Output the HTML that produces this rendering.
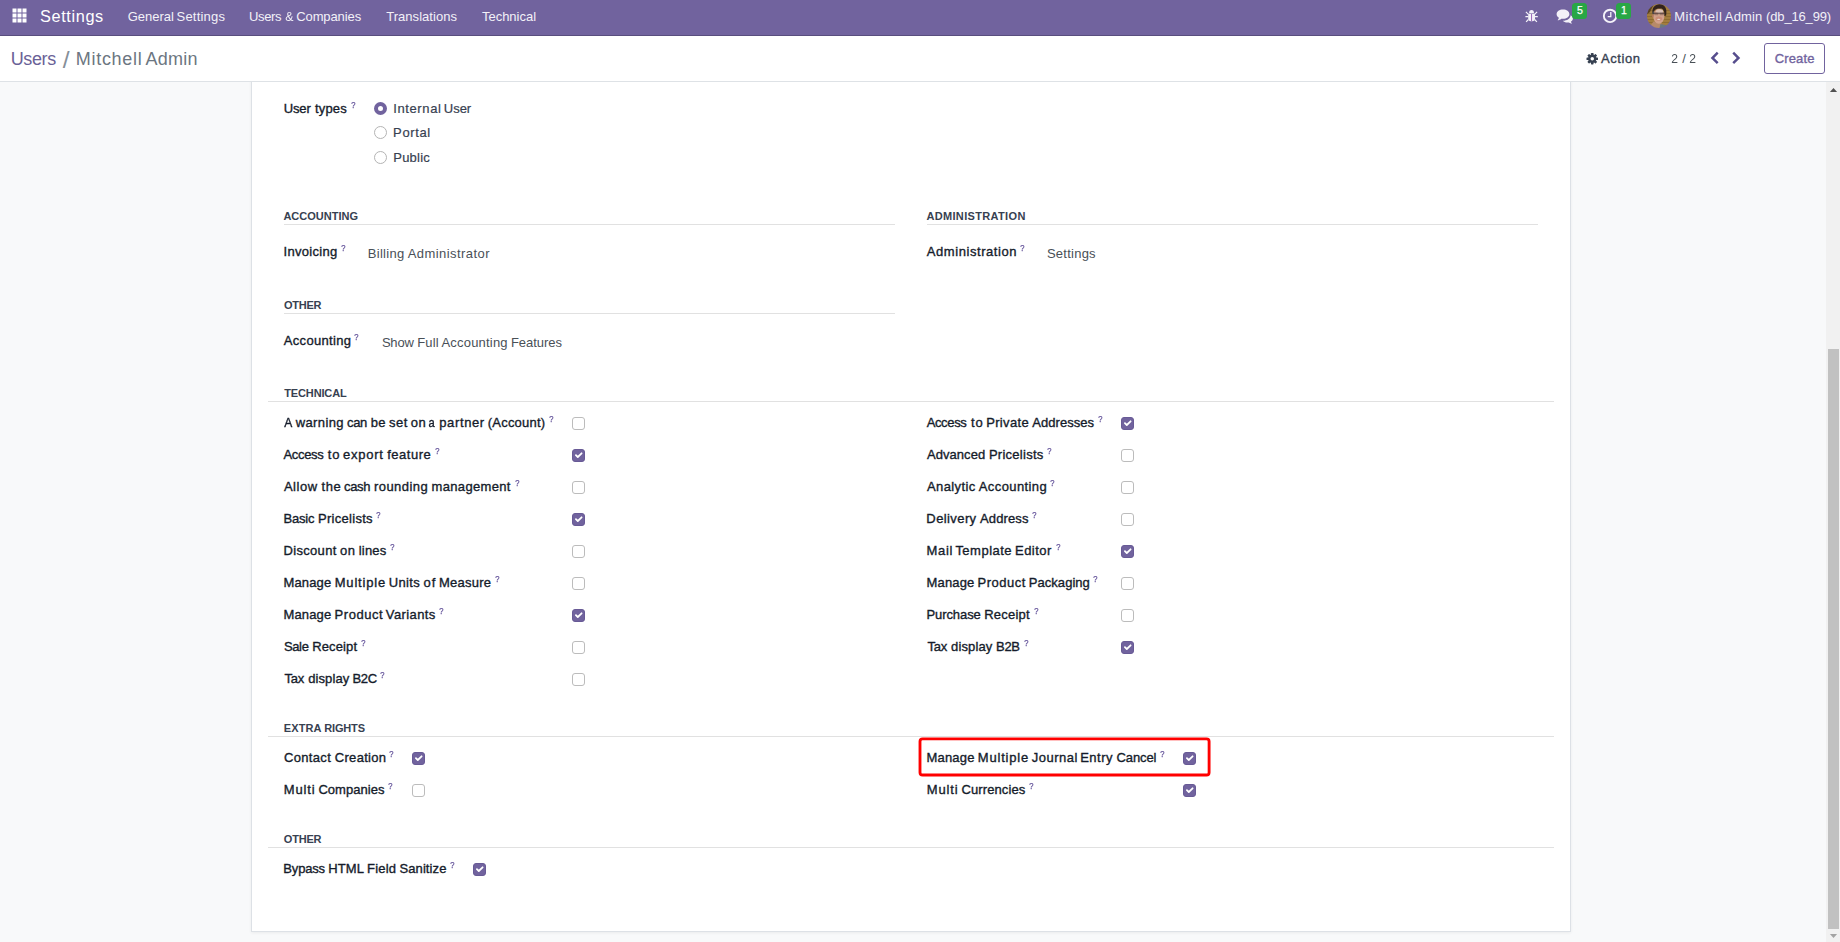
<!DOCTYPE html>
<html lang="en">
<head>
<meta charset="utf-8">
<title>Odoo - Mitchell Admin</title>
<style>
html,body{margin:0;padding:0;}
body{width:1840px;height:942px;overflow:hidden;position:relative;background:#f8f9fa;font-family:'Liberation Sans',sans-serif;font-size:13px;color:#212529;}
.abs{position:absolute;display:block;}
.ln{position:static;display:block;margin:0;padding:0;height:0;}
.t{position:absolute;display:block;white-space:nowrap;line-height:20px;}
#nav{left:0;top:0;width:1840px;height:35px;background:#71639e;border-bottom:1px solid #594e7e;}
#cp{left:0;top:36px;width:1840px;height:45px;background:#fff;border-bottom:1px solid #dee2e6;}
#sheet{left:251px;top:60px;width:1318px;height:870px;background:#fff;border:1px solid #dde1e6;box-shadow:0 1px 3px rgba(0,0,0,.06);}
.hl{position:absolute;display:block;height:1px;background:#e1e1e1;}
.cb{position:absolute;display:block;box-sizing:border-box;width:13px;height:13px;border:1px solid #bcbcbc;border-radius:3px;background:#fff;}
.cb.on{background:#71639e;border-color:#685a96;}
.cb svg{position:absolute;left:-1px;top:-1px;width:13px;height:13px;}
.cb svg path{fill:none;stroke:#fff;stroke-width:1.8;stroke-linecap:round;stroke-linejoin:round;}
.rd{position:absolute;display:block;box-sizing:border-box;width:13px;height:13px;border:1px solid #b4b4b4;border-radius:50%;background:#fff;}
.rd.on{border:4px solid #71639e;}
.badge{position:absolute;display:block;width:15.300px;height:16.200px;border-radius:3.500px;background:#28a745;}
#btn{left:1764px;top:43px;width:59px;height:29px;border:1px solid #71639e;border-radius:3px;background:#fff;}
#red{left:919px;top:737px;width:287px;height:35px;border:2px solid #ff0000;border-radius:3px;}
#sb{left:1826px;top:82px;width:14px;height:860px;background:#f1f1f1;}
#thumb{left:1828px;top:349px;width:11px;height:580px;background:#c1c1c1;}
.f0{font-size:16.3px;color:#ffffff;font-weight:400;}
.f1{font-size:13px;color:#f3f1f8;font-weight:400;}
.f2{font-size:18px;color:#6a6197;font-weight:400;}
.f3{font-size:24.5px;color:#868f99;font-weight:400;}
.f4{font-size:18px;color:#6c7681;font-weight:400;}
.f5{font-size:13px;color:#374151;font-weight:400;-webkit-text-stroke:0.35px currentColor;}
.f6{font-size:13px;color:#495057;font-weight:400;}
.f7{font-size:13px;color:#71639e;font-weight:400;-webkit-text-stroke:0.35px currentColor;}
.f8{font-size:13px;color:#151c2b;font-weight:400;-webkit-text-stroke:0.35px currentColor;}
.f9{font-size:8.8px;color:#63529a;font-weight:400;-webkit-text-stroke:0.25px currentColor;}
.f10{font-size:13px;color:#374151;font-weight:400;-webkit-text-stroke:0.2px currentColor;}
.f11{font-size:11px;color:#374151;font-weight:700;}
</style>
</head>
<body>
<div class="abs" id="sheet"></div>
<div class="abs" id="nav"></div>
<div class="abs" id="cp"></div>

<!-- apps icon -->
<svg class="abs" style="left:12px;top:8px" width="15" height="15" viewBox="0 0 15 15"><g fill="#fff"><rect x="0.5" y="0.5" width="4" height="4"/><rect x="5.5" y="0.5" width="4" height="4"/><rect x="10.5" y="0.5" width="4" height="4"/><rect x="0.5" y="5.5" width="4" height="4"/><rect x="5.5" y="5.5" width="4" height="4"/><rect x="10.5" y="5.5" width="4" height="4"/><rect x="0.5" y="10.5" width="4" height="4"/><rect x="5.5" y="10.5" width="4" height="4"/><rect x="10.5" y="10.5" width="4" height="4"/></g></svg>

<!-- bug icon -->
<svg class="abs" style="left:1525px;top:9px" width="14" height="14" viewBox="0 0 14 14"><g fill="#f4f2f9"><path d="M4.100 4.300A2.450 3.300 0 0 1 9 4.300z"/><path d="M3.200 4.700h6.800v4.800a2.700 2.700 0 0 1-2.700 2.700h-1.400a2.700 2.700 0 0 1-2.700-2.700z"/></g><path d="M0.900 2.900l2.500 2.500M12.100 2.900 9.600 5.400M0.400 7.600h3M9.800 7.600h3M3.400 10.500l-2.300 2.300M9.600 10.500l2.300 2.300" stroke="#f4f2f9" stroke-width="1.200" fill="none"/><path d="M6.550 5v7.200" stroke="#9a66b8" stroke-width="1"/></svg>

<!-- chat icon -->
<svg class="abs" style="left:1556px;top:9px" width="18" height="15" viewBox="0 0 18 15"><g fill="#f3f1f8"><path d="M7 0.6c3.6 0 6.4 2 6.4 4.6S10.600 9.800 7 9.800c-.6 0-1.200-.05-1.700-.15C4.300 10.600 2.900 11.100 1.600 11.200c.7-.7 1.200-1.500 1.300-2.400C1.500 7.900.6 6.600.6 5.200.6 2.600 3.400.6 7 .6z"/><path d="M14.600 6.200c1.400.8 2.300 2 2.300 3.300 0 1.200-.7 2.300-1.900 3.100.1.800.5 1.500 1.100 2.100-1.200-.1-2.400-.6-3.300-1.300-.4.100-.9.100-1.400.1-1.900 0-3.600-.7-4.600-1.800 4 .1 7.700-2 7.800-5.500z"/></g></svg>
<i class="badge" style="left:1572.200px;top:3px"></i>

<!-- clock icon -->
<svg class="abs" style="left:1602px;top:8px" width="16" height="16" viewBox="0 0 16 16"><circle cx="8.050" cy="7.900" r="6.200" fill="none" stroke="#f4f2f9" stroke-width="1.900"/><path d="M8.800 4v4.700H5.700" fill="none" stroke="#f4f2f9" stroke-width="1.300"/></svg>
<i class="badge" style="left:1616px;top:3px"></i>

<!-- avatar -->
<svg class="abs" style="left:1647px;top:4px" width="24" height="24" viewBox="0 0 24 24"><defs><clipPath id="av"><circle cx="12" cy="12" r="12"/></clipPath><filter id="bl" x="-20%" y="-20%" width="140%" height="140%"><feGaussianBlur stdDeviation="0.750"/></filter></defs><g clip-path="url(#av)"><g filter="url(#bl)"><rect x="-4" y="-4" width="32" height="32" fill="#a37d3c"/><path d="M-1 6.500h26M-1 9.500h26M-1 12.500h26M-1 15.500h26M-1 18.500h26" stroke="#7a5a28" stroke-width=".800" opacity=".600"/><path d="M-2-2h10L3 8-2 12z" fill="#5a4322"/><path d="M1 25 6.500 17.500l8 2 1 5.500z" fill="#b78a69"/><path d="M13.500 20 20.500 21.500 17 26h-5z" fill="#6a787e"/><ellipse cx="11.800" cy="12.300" rx="5.600" ry="7.400" fill="#d2a18b"/><ellipse cx="12.600" cy="7.300" rx="3.600" ry="2.100" fill="#dbc0b3"/><ellipse cx="5.800" cy="11.800" rx=".900" ry="1.600" fill="#b5775d"/><path d="M5.500 9.500C4.600 3.800 8 .200 12.600.200c5.200 0 7.800 4.100 6.500 11.400l-1.700.400c.400-3.800-.700-6.300-2.800-7.400-3-.500-5.600 0-6.900 1.400-.900 1.300-1 2.300-1.100 3.700z" fill="#30241f"/><path d="M5.600 7.500h1.600v2.700H5.700z" fill="#5c5a60"/><rect x="7.300" y="8.800" width="4.100" height="2.400" rx=".600" fill="#5a4238" opacity=".400"/><rect x="12.600" y="8.800" width="4.300" height="2.400" rx=".600" fill="#5a4238" opacity=".400"/><path d="M5.800 9.200h12" stroke="#3d2e2e" stroke-width=".800"/><ellipse cx="11.800" cy="14.700" rx="3.300" ry="2.100" fill="#c8826e" opacity=".650"/><ellipse cx="11.700" cy="15.300" rx="1.700" ry=".650" fill="#ead6cf"/></g></g></svg>

<!-- control panel icons -->
<svg class="abs" style="left:1585px;top:51px" width="15" height="15" viewBox="0 0 15 15"><g transform="translate(7.250 7.700)" fill="#374151"><circle r="4.150"/><rect x="-1.300" y="-5.750" width="2.600" height="2.600" rx=".600" transform="rotate(0)"/><rect x="-1.300" y="-5.750" width="2.600" height="2.600" rx=".600" transform="rotate(45)"/><rect x="-1.300" y="-5.750" width="2.600" height="2.600" rx=".600" transform="rotate(90)"/><rect x="-1.300" y="-5.750" width="2.600" height="2.600" rx=".600" transform="rotate(135)"/><rect x="-1.300" y="-5.750" width="2.600" height="2.600" rx=".600" transform="rotate(180)"/><rect x="-1.300" y="-5.750" width="2.600" height="2.600" rx=".600" transform="rotate(225)"/><rect x="-1.300" y="-5.750" width="2.600" height="2.600" rx=".600" transform="rotate(270)"/><rect x="-1.300" y="-5.750" width="2.600" height="2.600" rx=".600" transform="rotate(315)"/><circle r="1.750" fill="#fff"/></g></svg>
<svg class="abs" style="left:1708px;top:50px" width="14" height="16" viewBox="0 0 14 16"><path d="M2.700 7.900 8.800 1.800l1.750 1.750L6.200 7.900l4.350 4.350L8.800 14z" fill="#564d8d"/></svg>
<svg class="abs" style="left:1730px;top:50px" width="14" height="16" viewBox="0 0 14 16"><path d="M10.200 7.900 4.100 1.800 2.350 3.550 6.700 7.900 2.350 12.250 4.100 14z" fill="#564d8d"/></svg>
<div class="abs" id="btn"></div>

<!-- separators -->
<i class="hl" style="left:284px;top:224px;width:611px"></i>
<i class="hl" style="left:927px;top:224px;width:611px"></i>
<i class="hl" style="left:284px;top:313px;width:611px"></i>
<i class="hl" style="left:268px;top:401px;width:1286px"></i>
<i class="hl" style="left:268px;top:736px;width:1286px"></i>
<i class="hl" style="left:268px;top:847px;width:1286px"></i>

<!-- radios -->
<i class="rd on" style="left:374px;top:102px"></i>
<i class="rd" style="left:374px;top:126px"></i>
<i class="rd" style="left:374px;top:151px"></i>

<i class="cb" style="left:572px;top:417px"></i>
<i class="cb on" style="left:572px;top:449px"><svg viewBox="0 0 13 13"><path d="M3.9 6.200 5.800 8 9.600 4.300"/></svg></i>
<i class="cb" style="left:572px;top:481px"></i>
<i class="cb on" style="left:572px;top:513px"><svg viewBox="0 0 13 13"><path d="M3.9 6.200 5.800 8 9.600 4.300"/></svg></i>
<i class="cb" style="left:572px;top:545px"></i>
<i class="cb" style="left:572px;top:577px"></i>
<i class="cb on" style="left:572px;top:609px"><svg viewBox="0 0 13 13"><path d="M3.9 6.200 5.800 8 9.600 4.300"/></svg></i>
<i class="cb" style="left:572px;top:641px"></i>
<i class="cb" style="left:572px;top:673px"></i>
<i class="cb on" style="left:1121px;top:417px"><svg viewBox="0 0 13 13"><path d="M3.9 6.200 5.800 8 9.600 4.300"/></svg></i>
<i class="cb" style="left:1121px;top:449px"></i>
<i class="cb" style="left:1121px;top:481px"></i>
<i class="cb" style="left:1121px;top:513px"></i>
<i class="cb on" style="left:1121px;top:545px"><svg viewBox="0 0 13 13"><path d="M3.9 6.200 5.800 8 9.600 4.300"/></svg></i>
<i class="cb" style="left:1121px;top:577px"></i>
<i class="cb" style="left:1121px;top:609px"></i>
<i class="cb on" style="left:1121px;top:641px"><svg viewBox="0 0 13 13"><path d="M3.9 6.200 5.800 8 9.600 4.300"/></svg></i>
<i class="cb on" style="left:412px;top:752px"><svg viewBox="0 0 13 13"><path d="M3.9 6.200 5.800 8 9.600 4.300"/></svg></i>
<i class="cb" style="left:412px;top:784px"></i>
<i class="cb on" style="left:1183px;top:752px"><svg viewBox="0 0 13 13"><path d="M3.9 6.200 5.800 8 9.600 4.300"/></svg></i>
<i class="cb on" style="left:1183px;top:784px"><svg viewBox="0 0 13 13"><path d="M3.9 6.200 5.800 8 9.600 4.300"/></svg></i>
<i class="cb on" style="left:473px;top:863px"><svg viewBox="0 0 13 13"><path d="M3.9 6.200 5.800 8 9.600 4.300"/></svg></i>

<svg class="abs" style="left:910px;top:730px" width="310" height="56" viewBox="910 730 310 56"><rect x="920" y="738.800" width="289.100" height="36.200" rx="2.600" fill="none" stroke="#ff0000" stroke-width="2.850"/></svg>

<!-- scrollbar -->
<div class="abs" id="sb"></div>
<div class="abs" id="thumb"></div>
<svg class="abs" style="left:1826px;top:82px" width="14" height="15" viewBox="1826 82 14 15"><path d="M1829.900 92h7.200L1833.500 87.900z" fill="#505050"/></svg>
<svg class="abs" style="left:1826px;top:927px" width="14" height="15" viewBox="1826 927 14 15"><path d="M1829.900 934h7.200L1833.500 938.100z" fill="#a3a3a3"/></svg>

<div class="ln"><span class="t f0" style="left:40.08px;top:6px;letter-spacing:0.614px;">Settings</span></div>
<div class="ln"><span class="t f1" style="left:127.71px;top:7px;letter-spacing:0.008px;">General</span> <span class="t f1" style="left:176.53px;top:7px;letter-spacing:0.202px;">Settings</span></div>
<div class="ln"><span class="t f1" style="left:248.93px;top:7px;letter-spacing:-0.338px;">Users</span> <span class="t f1" style="left:284.64px;top:7px;transform:scaleX(0.946);transform-origin:4.50px 50%;">&amp;</span> <span class="t f1" style="left:296.23px;top:7px;letter-spacing:-0.101px;">Companies</span></div>
<div class="ln"><span class="t f1" style="left:386.20px;top:7px;letter-spacing:0.045px;">Translations</span></div>
<div class="ln"><span class="t f1" style="left:481.95px;top:7px;letter-spacing:-0.012px;">Technical</span></div>
<div class="ln"><span class="t f1" style="left:1674.25px;top:7px;letter-spacing:0.500px;">Mitchell</span> <span class="t f1" style="left:1724.87px;top:7px;letter-spacing:0.139px;">Admin</span> <span class="t f1" style="left:1766.05px;top:7px;letter-spacing:-0.151px;">(db_16_99)</span></div>
<div class="ln"><span class="t f2" style="left:10.65px;top:49px;letter-spacing:-0.350px;">Users</span></div>
<div class="ln"><span class="t f3" style="left:62.78px;top:50px;line-height:20px;">/</span></div>
<div class="ln"><span class="t f4" style="left:75.68px;top:49px;letter-spacing:0.739px;">Mitchell</span> <span class="t f4" style="left:145.53px;top:49px;letter-spacing:0.273px;">Admin</span></div>
<div class="ln"><span class="t f5" style="left:1601.10px;top:49px;letter-spacing:0.530px;">Action</span></div>
<div class="ln"><span class="t f6" style="left:1671.10px;top:49px;transform:scaleX(0.931);transform-origin:3.62px 50%;">2</span> <span class="t f6" style="left:1682.15px;top:49px;">/</span> <span class="t f6" style="left:1689.45px;top:49px;transform:scaleX(0.931);transform-origin:3.62px 50%;">2</span></div>
<div class="ln"><span class="t f7" style="left:1774.65px;top:49px;letter-spacing:0.150px;">Create</span></div>
<div class="ln"><span class="t f8" style="left:283.68px;top:99px;letter-spacing:-0.135px;">User</span> <span class="t f8" style="left:314.95px;top:99px;letter-spacing:0.192px;">types</span></div>
<div class="ln"><span class="t f9" style="left:350.50px;top:95px;transform:scaleX(.86);transform-origin:2.50px 50%;">?</span></div>
<div class="ln"><span class="t f10" style="left:393.15px;top:99px;letter-spacing:0.625px;">Internal</span> <span class="t f10" style="left:443.74px;top:99px;letter-spacing:0.003px;">User</span></div>
<div class="ln"><span class="t f10" style="left:393.12px;top:123px;letter-spacing:0.630px;">Portal</span></div>
<div class="ln"><span class="t f10" style="left:393.25px;top:148px;letter-spacing:0.230px;">Public</span></div>
<div class="ln"><span class="t f11" style="left:283.40px;top:206px;letter-spacing:0.017px;">ACCOUNTING</span></div>
<div class="ln"><span class="t f11" style="left:926.38px;top:206px;letter-spacing:0.342px;">ADMINISTRATION</span></div>
<div class="ln"><span class="t f8" style="left:283.50px;top:242px;letter-spacing:0.300px;">Invoicing</span></div>
<div class="ln"><span class="t f9" style="left:340.60px;top:238px;transform:scaleX(.86);transform-origin:2.50px 50%;">?</span></div>
<div class="ln"><span class="t f6" style="left:367.75px;top:244px;letter-spacing:0.292px;">Billing</span> <span class="t f6" style="left:407.66px;top:244px;letter-spacing:0.437px;">Administrator</span></div>
<div class="ln"><span class="t f8" style="left:926.80px;top:242px;letter-spacing:0.565px;">Administration</span></div>
<div class="ln"><span class="t f9" style="left:1019.80px;top:238px;transform:scaleX(.86);transform-origin:2.50px 50%;">?</span></div>
<div class="ln"><span class="t f6" style="left:1046.90px;top:244px;letter-spacing:0.250px;">Settings</span></div>
<div class="ln"><span class="t f11" style="left:283.93px;top:295px;letter-spacing:-0.237px;">OTHER</span></div>
<div class="ln"><span class="t f8" style="left:283.80px;top:331px;letter-spacing:0.317px;">Accounting</span></div>
<div class="ln"><span class="t f9" style="left:354.30px;top:327px;transform:scaleX(.86);transform-origin:2.50px 50%;">?</span></div>
<div class="ln"><span class="t f6" style="left:381.91px;top:333px;letter-spacing:-0.209px;">Show</span> <span class="t f6" style="left:417.24px;top:333px;letter-spacing:0.183px;">Full</span> <span class="t f6" style="left:441.44px;top:333px;letter-spacing:0.202px;">Accounting</span> <span class="t f6" style="left:510.88px;top:333px;letter-spacing:-0.016px;">Features</span></div>
<div class="ln"><span class="t f11" style="left:284.27px;top:383px;letter-spacing:-0.144px;">TECHNICAL</span></div>
<div class="ln"><span class="t f8" style="left:283.52px;top:413px;transform:scaleX(0.928);transform-origin:4.25px 50%;">A</span> <span class="t f8" style="left:295.77px;top:413px;letter-spacing:0.368px;">warning</span> <span class="t f8" style="left:347.08px;top:413px;letter-spacing:-0.350px;">can</span> <span class="t f8" style="left:370.83px;top:413px;letter-spacing:0.127px;">be</span> <span class="t f8" style="left:389.07px;top:413px;letter-spacing:0.420px;">set</span> <span class="t f8" style="left:410.80px;top:413px;letter-spacing:0.388px;">on</span> <span class="t f8" style="left:428.21px;top:413px;transform:scaleX(0.860);transform-origin:4.00px 50%;">a</span> <span class="t f8" style="left:439.19px;top:413px;letter-spacing:0.636px;">partner</span> <span class="t f8" style="left:487.70px;top:413px;letter-spacing:0.234px;">(Account)</span></div>
<div class="ln"><span class="t f9" style="left:548.70px;top:409px;transform:scaleX(.86);transform-origin:2.50px 50%;">?</span></div>
<div class="ln"><span class="t f8" style="left:283.56px;top:445px;letter-spacing:-0.350px;">Access</span> <span class="t f8" style="left:327.77px;top:445px;letter-spacing:0.900px;">to</span> <span class="t f8" style="left:342.97px;top:445px;letter-spacing:0.744px;">export</span> <span class="t f8" style="left:387.21px;top:445px;letter-spacing:0.522px;">feature</span></div>
<div class="ln"><span class="t f9" style="left:434.50px;top:441px;transform:scaleX(.86);transform-origin:2.50px 50%;">?</span></div>
<div class="ln"><span class="t f8" style="left:283.92px;top:477px;letter-spacing:0.511px;">Allow</span> <span class="t f8" style="left:321.52px;top:477px;letter-spacing:0.554px;">the</span> <span class="t f8" style="left:344.07px;top:477px;letter-spacing:-0.350px;">cash</span> <span class="t f8" style="left:373.94px;top:477px;letter-spacing:0.450px;">rounding</span> <span class="t f8" style="left:431.50px;top:477px;letter-spacing:0.343px;">management</span></div>
<div class="ln"><span class="t f9" style="left:514.50px;top:473px;transform:scaleX(.86);transform-origin:2.50px 50%;">?</span></div>
<div class="ln"><span class="t f8" style="left:283.51px;top:509px;letter-spacing:-0.200px;">Basic</span> <span class="t f8" style="left:317.95px;top:509px;letter-spacing:0.292px;">Pricelists</span></div>
<div class="ln"><span class="t f9" style="left:376.30px;top:505px;transform:scaleX(.86);transform-origin:2.50px 50%;">?</span></div>
<div class="ln"><span class="t f8" style="left:283.46px;top:541px;letter-spacing:0.332px;">Discount</span> <span class="t f8" style="left:340.00px;top:541px;letter-spacing:0.560px;">on</span> <span class="t f8" style="left:358.75px;top:541px;letter-spacing:0.202px;">lines</span></div>
<div class="ln"><span class="t f9" style="left:390.00px;top:537px;transform:scaleX(.86);transform-origin:2.50px 50%;">?</span></div>
<div class="ln"><span class="t f8" style="left:283.42px;top:573px;letter-spacing:0.159px;">Manage</span> <span class="t f8" style="left:334.71px;top:573px;letter-spacing:0.814px;">Multiple</span> <span class="t f8" style="left:388.76px;top:573px;letter-spacing:0.325px;">Units</span> <span class="t f8" style="left:423.51px;top:573px;letter-spacing:0.900px;">of</span> <span class="t f8" style="left:439.05px;top:573px;letter-spacing:0.215px;">Measure</span></div>
<div class="ln"><span class="t f9" style="left:494.60px;top:569px;transform:scaleX(.86);transform-origin:2.50px 50%;">?</span></div>
<div class="ln"><span class="t f8" style="left:283.40px;top:605px;letter-spacing:0.168px;">Manage</span> <span class="t f8" style="left:334.62px;top:605px;letter-spacing:0.519px;">Product</span> <span class="t f8" style="left:385.83px;top:605px;letter-spacing:0.392px;">Variants</span></div>
<div class="ln"><span class="t f9" style="left:439.10px;top:601px;transform:scaleX(.86);transform-origin:2.50px 50%;">?</span></div>
<div class="ln"><span class="t f8" style="left:283.90px;top:637px;letter-spacing:-0.350px;">Sale</span> <span class="t f8" style="left:312.14px;top:637px;letter-spacing:0.140px;">Receipt</span></div>
<div class="ln"><span class="t f9" style="left:361.20px;top:633px;transform:scaleX(.86);transform-origin:2.50px 50%;">?</span></div>
<div class="ln"><span class="t f8" style="left:284.40px;top:669px;letter-spacing:-0.219px;">Tax</span> <span class="t f8" style="left:308.14px;top:669px;letter-spacing:0.109px;">display</span> <span class="t f8" style="left:352.52px;top:669px;letter-spacing:-0.350px;">B2C</span></div>
<div class="ln"><span class="t f9" style="left:380.40px;top:665px;transform:scaleX(.86);transform-origin:2.50px 50%;">?</span></div>
<div class="ln"><span class="t f8" style="left:926.63px;top:413px;letter-spacing:-0.350px;">Access</span> <span class="t f8" style="left:970.94px;top:413px;letter-spacing:0.900px;">to</span> <span class="t f8" style="left:986.14px;top:413px;letter-spacing:0.352px;">Private</span> <span class="t f8" style="left:1032.31px;top:413px;letter-spacing:0.036px;">Addresses</span></div>
<div class="ln"><span class="t f9" style="left:1097.80px;top:409px;transform:scaleX(.86);transform-origin:2.50px 50%;">?</span></div>
<div class="ln"><span class="t f8" style="left:926.94px;top:445px;letter-spacing:0.062px;">Advanced</span> <span class="t f8" style="left:988.90px;top:445px;letter-spacing:0.264px;">Pricelists</span></div>
<div class="ln"><span class="t f9" style="left:1047.00px;top:441px;transform:scaleX(.86);transform-origin:2.50px 50%;">?</span></div>
<div class="ln"><span class="t f8" style="left:926.95px;top:477px;letter-spacing:0.402px;">Analytic</span> <span class="t f8" style="left:978.79px;top:477px;letter-spacing:0.395px;">Accounting</span></div>
<div class="ln"><span class="t f9" style="left:1050.00px;top:473px;transform:scaleX(.86);transform-origin:2.50px 50%;">?</span></div>
<div class="ln"><span class="t f8" style="left:926.36px;top:509px;letter-spacing:0.400px;">Delivery</span> <span class="t f8" style="left:979.99px;top:509px;letter-spacing:0.127px;">Address</span></div>
<div class="ln"><span class="t f9" style="left:1032.20px;top:505px;transform:scaleX(.86);transform-origin:2.50px 50%;">?</span></div>
<div class="ln"><span class="t f8" style="left:926.47px;top:541px;letter-spacing:0.725px;">Mail</span> <span class="t f8" style="left:955.38px;top:541px;letter-spacing:0.494px;">Template</span> <span class="t f8" style="left:1014.99px;top:541px;letter-spacing:0.493px;">Editor</span></div>
<div class="ln"><span class="t f9" style="left:1055.50px;top:537px;transform:scaleX(.86);transform-origin:2.50px 50%;">?</span></div>
<div class="ln"><span class="t f8" style="left:926.52px;top:573px;letter-spacing:0.155px;">Manage</span> <span class="t f8" style="left:977.59px;top:573px;letter-spacing:0.509px;">Product</span> <span class="t f8" style="left:1028.87px;top:573px;letter-spacing:0.028px;">Packaging</span></div>
<div class="ln"><span class="t f9" style="left:1093.20px;top:569px;transform:scaleX(.86);transform-origin:2.50px 50%;">?</span></div>
<div class="ln"><span class="t f8" style="left:926.45px;top:605px;letter-spacing:-0.076px;">Purchase</span> <span class="t f8" style="left:984.19px;top:605px;letter-spacing:0.234px;">Receipt</span></div>
<div class="ln"><span class="t f9" style="left:1033.70px;top:601px;transform:scaleX(.86);transform-origin:2.50px 50%;">?</span></div>
<div class="ln"><span class="t f8" style="left:927.41px;top:637px;letter-spacing:-0.175px;">Tax</span> <span class="t f8" style="left:951.06px;top:637px;letter-spacing:0.139px;">display</span> <span class="t f8" style="left:995.98px;top:637px;letter-spacing:-0.259px;">B2B</span></div>
<div class="ln"><span class="t f9" style="left:1023.50px;top:633px;transform:scaleX(.86);transform-origin:2.50px 50%;">?</span></div>
<div class="ln"><span class="t f11" style="left:283.73px;top:718px;letter-spacing:0.126px;">EXTRA</span> <span class="t f11" style="left:324.17px;top:718px;letter-spacing:-0.136px;">RIGHTS</span></div>
<div class="ln"><span class="t f8" style="left:283.96px;top:748px;letter-spacing:0.340px;">Contact</span> <span class="t f8" style="left:334.82px;top:748px;letter-spacing:0.289px;">Creation</span></div>
<div class="ln"><span class="t f9" style="left:389.40px;top:744px;transform:scaleX(.86);transform-origin:2.50px 50%;">?</span></div>
<div class="ln"><span class="t f8" style="left:283.67px;top:780px;letter-spacing:0.900px;">Multi</span> <span class="t f8" style="left:318.43px;top:780px;letter-spacing:0.037px;">Companies</span></div>
<div class="ln"><span class="t f9" style="left:388.20px;top:776px;transform:scaleX(.86);transform-origin:2.50px 50%;">?</span></div>
<div class="ln"><span class="t f8" style="left:926.45px;top:748px;letter-spacing:0.194px;">Manage</span> <span class="t f8" style="left:977.79px;top:748px;letter-spacing:0.805px;">Multiple</span> <span class="t f8" style="left:1031.73px;top:748px;letter-spacing:0.523px;">Journal</span> <span class="t f8" style="left:1080.16px;top:748px;letter-spacing:0.503px;">Entry</span> <span class="t f8" style="left:1116.54px;top:748px;letter-spacing:-0.103px;">Cancel</span></div>
<div class="ln"><span class="t f9" style="left:1159.90px;top:744px;transform:scaleX(.86);transform-origin:2.50px 50%;">?</span></div>
<div class="ln"><span class="t f8" style="left:926.69px;top:780px;letter-spacing:0.900px;">Multi</span> <span class="t f8" style="left:961.53px;top:780px;letter-spacing:0.098px;">Currencies</span></div>
<div class="ln"><span class="t f9" style="left:1029.10px;top:776px;transform:scaleX(.86);transform-origin:2.50px 50%;">?</span></div>
<div class="ln"><span class="t f11" style="left:283.85px;top:829px;letter-spacing:-0.200px;">OTHER</span></div>
<div class="ln"><span class="t f8" style="left:283.37px;top:859px;letter-spacing:-0.181px;">Bypass</span> <span class="t f8" style="left:328.35px;top:859px;letter-spacing:0.081px;">HTML</span> <span class="t f8" style="left:366.99px;top:859px;letter-spacing:0.211px;">Field</span> <span class="t f8" style="left:399.46px;top:859px;letter-spacing:0.098px;">Sanitize</span></div>
<div class="ln"><span class="t f9" style="left:450.10px;top:855px;transform:scaleX(.86);transform-origin:2.50px 50%;">?</span></div>
<span class="t" style="left:1577px;top:0px;font-size:10.600px;font-weight:400;-webkit-text-stroke:.250px #fff;color:#fff;line-height:20px">5</span>
<span class="t" style="left:1621px;top:0px;font-size:10.600px;font-weight:400;-webkit-text-stroke:.250px #fff;color:#fff;line-height:20px">1</span>
</body>
</html>
